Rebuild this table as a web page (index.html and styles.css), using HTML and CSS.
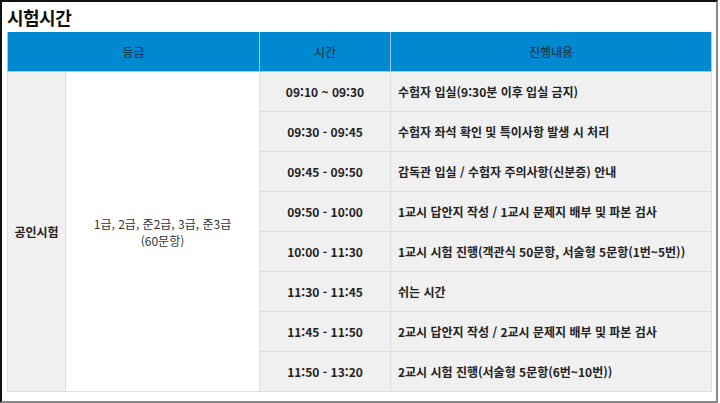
FILE: index.html
```html
<!DOCTYPE html>
<html lang="ko">
<head>
    <meta charset="UTF-8">
    <meta name="viewport" content="width=device-width, initial-scale=1.0">
    <title>시험시간</title>
    <link rel="stylesheet" href="styles.css">
</head>
<body>

<div class="frame">
    <h2 class="title">시험시간</h2>
    <table class="schedule">
        <colgroup>
            <col class="col-type">
            <col class="col-grade">
            <col class="col-time">
            <col class="col-desc">
        </colgroup>
        <thead>
            <tr>
                <th colspan="2">등급</th>
                <th>시간</th>
                <th>진행내용</th>
            </tr>
        </thead>
        <tbody>
            <tr>
                <td class="type" rowspan="8">공인시험</td>
                <td class="grade" rowspan="8">1급, 2급, 준2급, 3급, 준3급<br>(60문항)</td>
                <td class="time">09:10 ~ 09:30</td>
                <td class="desc">수험자 입실(9:30분 이후 입실 금지)</td>
            </tr>
            <tr>
                <td class="time">09:30 - 09:45</td>
                <td class="desc">수험자 좌석 확인 및 특이사항 발생 시 처리</td>
            </tr>
            <tr>
                <td class="time">09:45 - 09:50</td>
                <td class="desc">감독관 입실 / 수험자 주의사항(신분증) 안내</td>
            </tr>
            <tr>
                <td class="time">09:50 - 10:00</td>
                <td class="desc">1교시 답안지 작성 / 1교시 문제지 배부 및 파본 검사</td>
            </tr>
            <tr>
                <td class="time">10:00 - 11:30</td>
                <td class="desc">1교시 시험 진행(객관식 50문항, 서술형 5문항(1번~5번))</td>
            </tr>
            <tr>
                <td class="time">11:30 - 11:45</td>
                <td class="desc">쉬는 시간</td>
            </tr>
            <tr>
                <td class="time">11:45 - 11:50</td>
                <td class="desc">2교시 답안지 작성 / 2교시 문제지 배부 및 파본 검사</td>
            </tr>
            <tr>
                <td class="time">11:50 - 13:20</td>
                <td class="desc">2교시 시험 진행(서술형 5문항(6번~10번))</td>
            </tr>
        </tbody>
    </table>
</div>

</body>
</html>
```

FILE: styles.css
```css
html, body {
    margin: 0;
    padding: 0;
    background-color: #fff;
}
body {
    font-family: "Noto Sans CJK KR", "Noto Sans", sans-serif;
    color: #333;
}
.frame {
    width: 718px;
    height: 403px;
    box-sizing: border-box;
    border-top: 2px solid #111;
    border-left: 2px solid #111;
    border-right: 2px solid #8a8a8a;
    border-bottom: 2px solid #8a8a8a;
    padding: 0 0 0 5px;
    overflow: hidden;
}
.title {
    margin: 0;
    height: 30px;
    line-height: 30px;
    font-size: 18px;
    font-weight: bold;
    color: #111;
    letter-spacing: -0.5px;
}
.schedule {
    width: 705px;
    border-collapse: collapse;
    table-layout: fixed;
    font-size: 12px;
}
.col-type {
    width: 58px;
}
.col-grade {
    width: 194px;
}
.col-time {
    width: 131px;
}
.schedule th {
    height: 39px;
    padding: 0;
    background-color: #0088d1;
    color: #1d2b36;
    font-weight: normal;
    border: 1px solid #9fcbe6;
    border-top: none;
}
.schedule td {
    height: 39px;
    padding: 0;
    border: 1px solid #dedede;
}
.type {
    background-color: #f0f0f0;
    font-weight: bold;
    text-align: center;
    color: #222;
}
.grade {
    background-color: #fff;
    text-align: center;
    line-height: 17px;
}
.time {
    background-color: #f0f0f0;
    font-weight: bold;
    text-align: center;
    color: #222;
}
.desc {
    background-color: #f0f0f0;
    font-weight: bold;
    color: #222;
    padding-left: 7px !important;
}
```
